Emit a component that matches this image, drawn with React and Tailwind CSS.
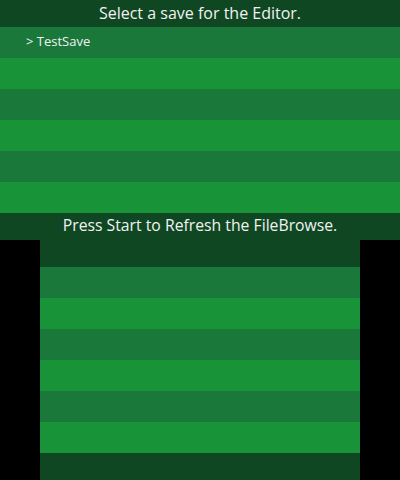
const topRows = ['mid', 'light', 'mid', 'light', 'mid', 'light'];
const bottomRows = ['mid', 'light', 'mid', 'light', 'mid', 'light'];

const rowColor = {
  mid: 'bg-[#1a783a]',
  light: 'bg-[#189338]',
};

const App = () => {
  return (
    <div
      className="flex h-[480px] w-[400px] flex-col bg-black text-[#f2f2f2]"
      style={{ fontFamily: '"Open Sans", "Liberation Sans", sans-serif' }}
    >
      {/* top screen */}
      <div className="flex h-[240px] w-[400px] flex-col">
        <div className="flex h-[27px] items-center justify-center bg-[#0f4722] pb-[2px] text-[16px]">
          Select a save for the Editor.
        </div>
        {topRows.map((tone, i) => (
          <div key={i} className={`flex h-[31px] items-center px-[26px] pb-[2px] text-[13px] ${rowColor[tone]}`}>
            {i === 0 && '> TestSave'}
          </div>
        ))}
        <div className="flex h-[27px] items-center justify-center bg-[#0f4722] pb-[1px] text-[15.75px]">
          Press Start to Refresh the FileBrowse.
        </div>
      </div>

      {/* bottom screen */}
      <div className="mx-auto flex h-[240px] w-[320px] flex-col">
        <div className="h-[27px] bg-[#0f4722]" />
        {bottomRows.map((tone, i) => (
          <div key={i} className={`h-[31px] ${rowColor[tone]}`} />
        ))}
        <div className="h-[27px] bg-[#0f4722]" />
      </div>
    </div>
  );
};

export default App;
